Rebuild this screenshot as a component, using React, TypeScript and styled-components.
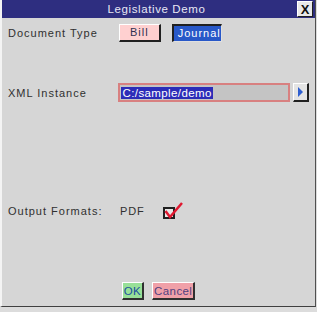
import { createGlobalStyle } from 'styled-components'
import styled from 'styled-components'

const GlobalStyle = createGlobalStyle`
  html, body {
    margin: 0;
    padding: 0;
    background: #dcdcdc;
  }
  body {
    font-family: "Liberation Sans", Arial, sans-serif;
    font-size: 11px;
  }
`

const Window = styled.div`
  width: 313px;
  height: 306px;
  display: flex;
  flex-direction: column;
  background: #d6d6d6;
  border-left: 2px solid #f4f4f4;
  border-right: 1px solid #505050;
  border-bottom: 1px solid #404040;
`

const TitleBar = styled.div`
  height: 18px;
  display: flex;
  align-items: center;
  background: #2e2e80;
`

const TitleText = styled.div`
  flex: 1;
  text-align: center;
  color: #e8e8f4;
  font-size: 11.5px;
  letter-spacing: 0.6px;
  padding-left: 14px;
`

const CloseButton = styled.div`
  width: 14px;
  height: 14px;
  margin-right: 2px;
  background: #e8e8e8;
  border: 1px solid #ffffff;
  border-right-color: #202020;
  border-bottom-color: #202020;
  display: flex;
  align-items: center;
  justify-content: center;
  font-size: 13px;
  font-weight: bold;
  color: #101010;
`

const Body = styled.div`
  flex: 1;
  display: flex;
  flex-direction: column;
  padding: 0 6px 0 6px;
`

const Row = styled.div<{ $top: number }>`
  display: flex;
  align-items: center;
  height: 19px;
  margin-top: ${p => p.$top}px;
`

const Label = styled.div`
  width: 111px;
  color: #303030;
  letter-spacing: 1px;
  font-size: 11px;
`

const ToggleButton = styled.div<{ $active?: boolean }>`
  height: 15px;
  padding: 0 10px;
  display: flex;
  align-items: center;
  letter-spacing: 1px;
  margin-right: 11px;
  ${p => p.$active ? `
    background: #2858c8;
    color: #ffffff;
    padding: 0 0 0 4px;
    border-top: 2px solid #202020;
    border-left: 2px solid #202020;
    border-right: 1px solid #e0e0e0;
    border-bottom: 1px solid #e0e0e0;
  ` : `
    background: #ffd0d0;
    color: #303050;
    border-top: 1px solid #ffffff;
    border-left: 1px solid #ffffff;
    border-right: 2px solid #202020;
    border-bottom: 2px solid #202020;
  `}
`

const InputBox = styled.div`
  width: 168px;
  height: 15px;
  display: flex;
  align-items: center;
  padding: 0 1px;
  background: #c4c4c4;
  border: 2px solid #d88080;
  margin-left: 1px;
`

const Selected = styled.span`
  background: #2c2cb8;
  color: #ffffff;
  letter-spacing: 0.4px;
  font-size: 11.5px;
  padding: 0 1px;
`

const ArrowButton = styled.div`
  width: 13px;
  height: 16px;
  margin-left: 3px;
  background: #e4e4e4;
  border-top: 1px solid #ffffff;
  border-left: 1px solid #ffffff;
  border-right: 2px solid #202020;
  border-bottom: 2px solid #202020;
  display: flex;
  align-items: center;
  justify-content: center;
`

const FormatText = styled.div`
  color: #303030;
  letter-spacing: 0.8px;
  margin-left: 1px;
  width: 43px;
`

const Footer = styled.div`
  display: flex;
  justify-content: center;
  gap: 8px;
  margin-top: auto;
  margin-bottom: 6px;
`

const DialogButton = styled.div<{ $bg: string; $fg: string }>`
  height: 15px;
  padding: 0 1px;
  display: flex;
  align-items: center;
  background: ${p => p.$bg};
  color: ${p => p.$fg};
  font-size: 11.5px;
  letter-spacing: 0.4px;
  border-top: 1px solid #ffffff;
  border-left: 1px solid #ffffff;
  border-right: 2px solid #303030;
  border-bottom: 2px solid #303030;
`

const App = () => {
  return (
    <>
      <GlobalStyle />
      <Window>
        <TitleBar>
          <TitleText>Legislative Demo</TitleText>
          <CloseButton>X</CloseButton>
        </TitleBar>
        <Body>
          <Row $top={5}>
            <Label>Document Type</Label>
            <ToggleButton>Bill</ToggleButton>
            <ToggleButton $active>Journal</ToggleButton>
          </Row>
          <Row $top={41}>
            <Label>XML Instance</Label>
            <InputBox>
              <Selected>C:/sample/demo</Selected>
            </InputBox>
            <ArrowButton>
              <svg width="7" height="10" viewBox="0 0 7 10">
                <path d="M1 0 L6 5 L1 10 Z" fill="#2f5fd0" />
              </svg>
            </ArrowButton>
          </Row>
          <Row $top={99}>
            <Label>Output Formats:</Label>
            <FormatText>PDF</FormatText>
            <svg width="21" height="18" viewBox="0 0 21 18">
              <rect x="1" y="6" width="10" height="10" fill="#e8e8e8" stroke="#202020" strokeWidth="2" />
              <path d="M2.5 9 L7 15 L19 1" fill="none" stroke="#e01830" strokeWidth="2.5" />
            </svg>
          </Row>
          <Footer>
            <DialogButton $bg="#98e098" $fg="#2050a0">OK</DialogButton>
            <DialogButton $bg="#f0a0a8" $fg="#504080">Cancel</DialogButton>
          </Footer>
        </Body>
      </Window>
    </>
  )
}

export default App
